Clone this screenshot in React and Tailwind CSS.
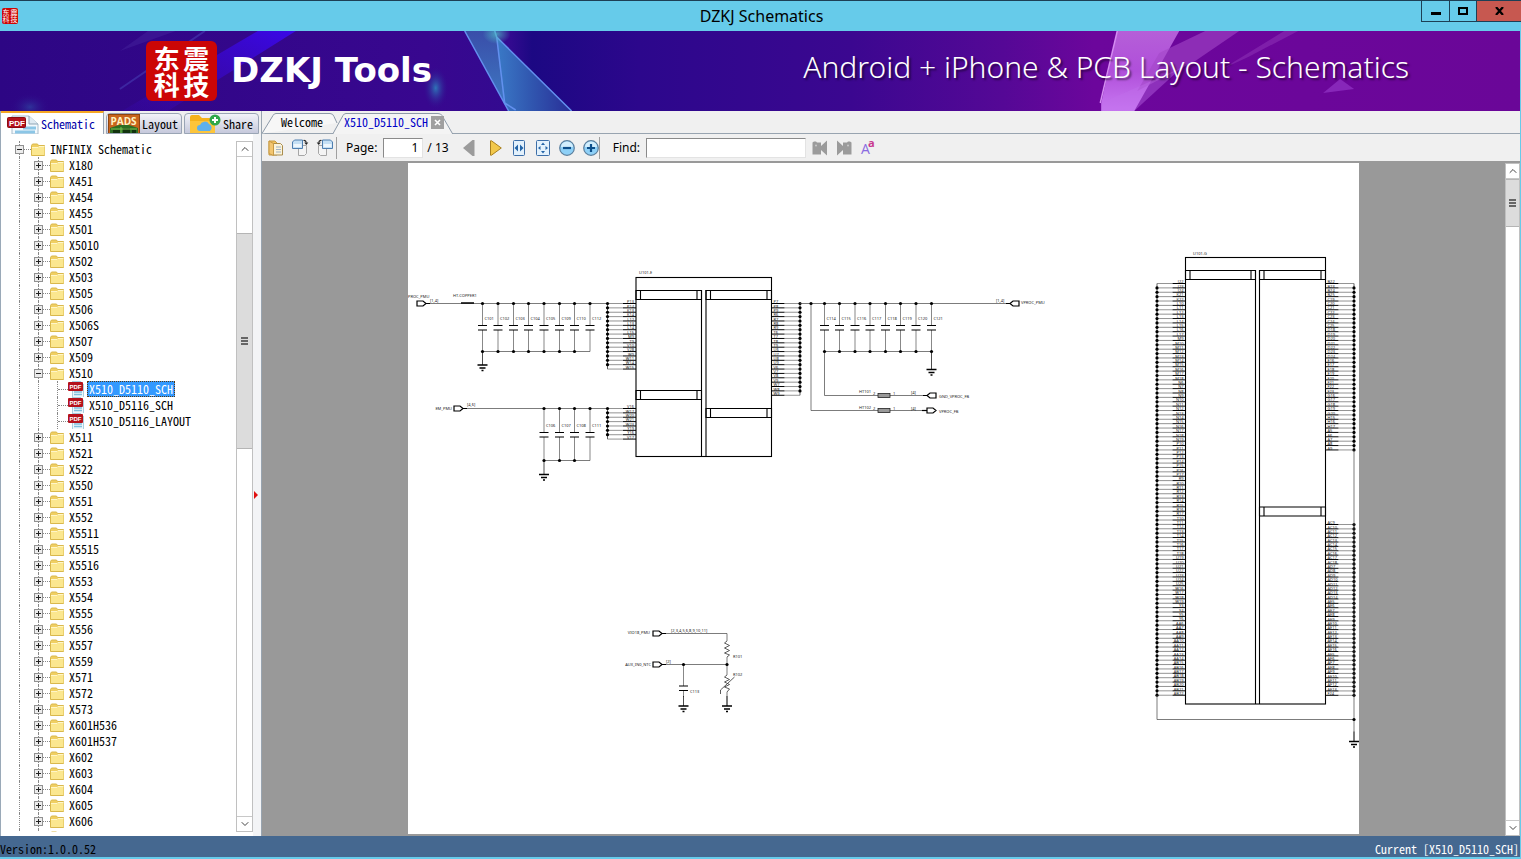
import { useState } from 'react';
import { clsx } from 'clsx';
import { ChevronUp, ChevronDown } from 'lucide-react';

const MONO = "font-['Noto_Sans_Mono_CJK_SC','DejaVu_Sans_Mono',monospace] text-[12px]";
const UI = "font-['Noto_Sans','Open_Sans',sans-serif]";

const before = ['X180', 'X451', 'X454', 'X455', 'X501', 'X5010', 'X502', 'X503', 'X505', 'X506', 'X506S', 'X507', 'X509'];
const files = ['X510_D5110_SCH', 'X510_D5116_SCH', 'X510_D5116_LAYOUT'];
const after = [
  'X511', 'X521', 'X522', 'X550', 'X551', 'X552', 'X5511', 'X5515', 'X5516', 'X553', 'X554', 'X555', 'X556', 'X557',
  'X559', 'X571', 'X572', 'X573', 'X601H536', 'X601H537', 'X602', 'X603', 'X604', 'X605', 'X606',
];

/* ---------- icons ---------- */

function FolderIcon() {
  return (
    <svg width="15" height="13" viewBox="0 0 15 13" className="shrink-0">
      <path d="M.5 2.500 1.500 1h5l1 1.500h6v10H.5z" fill="#f0cf62" stroke="#d9b84c" />
      <path d="M1 4.500h6l1-1h5.500v8.500H1z" fill="#fbe78f" />
      <path d="M1 4.500h6l1-1h5.500" fill="none" stroke="#fff6c8" />
    </svg>
  );
}

function PdfSmall() {
  return (
    <svg width="17" height="16" viewBox="0 0 17 16" className="shrink-0">
      <path d="M4 0h9l3 3v13H4z" fill="#eef7fb" />
      <path d="M4 .5h9M15.500 3v13M4.500 9v7" stroke="#a9cfe0" fill="none" />
      <path d="M6 11h8M6 13.500h8" stroke="#7fc0de" strokeWidth="1.500" />
      <rect x="0" y="1" width="15" height="9" rx="1" fill="#b5121b" />
      <text x="1.500" y="7.800" fontSize="6" fontWeight="700" fill="#fff" fontFamily="Liberation Sans, sans-serif">PDF</text>
    </svg>
  );
}

function PdfLarge() {
  return (
    <svg width="32" height="20" viewBox="0 0 32 20" className="shrink-0">
      <path d="M5 2h17l9 8v10H5z" fill="#f3f9fd" stroke="#a8bccb" />
      <path d="M22 2v8h9" fill="#dfeaf2" stroke="#8fa5b5" />
      <path d="M16 14h13M8 18h20" stroke="#8cc6e6" strokeWidth="3" />
      <rect x="0.500" y="3.500" width="18" height="10" rx="1" fill="#b5121b" stroke="#8b0a12" />
      <text x="2" y="11.500" fontSize="8" fontWeight="700" fill="#fff" fontFamily="Liberation Sans, sans-serif">PDF</text>
    </svg>
  );
}

function PadsIcon() {
  return (
    <svg width="32" height="19" viewBox="0 0 32 19" className="shrink-0">
      <rect x="0.500" y="0.500" width="31" height="20" fill="#c8641c" stroke="#8f4410" />
      <path d="M2 14 11 11h10l9 3v5H2z" fill="#2d6e22" />
      <path d="M5 16h7v3H5zM15 14h7v5h-7zM24 16h4v3h-4z" fill="#12330e" />
      <path d="M3 15h26M13 13v6" stroke="#79c04f" />
      <text x="2.500" y="10.500" fontSize="10" fontWeight="700" fill="#fff3c4" fontFamily="Open Sans, sans-serif">PADS</text>
    </svg>
  );
}

function ShareIcon() {
  return (
    <svg width="32" height="19" viewBox="0 0 32 19" className="shrink-0">
      <path d="M1 3q0-2 2-2h7l3 3h11q2 0 2 2v13H1z" fill="#f6b21b" />
      <path d="M1 7h25v12H1z" fill="#fdc53a" />
      <path d="M11 17a3 3 0 0 1 0-6 5 5 0 0 1 9-1 4 4 0 0 1 1 7z" fill="#5eb0ec" />
      <circle cx="26" cy="6" r="5.500" fill="#2fa84a" />
      <path d="M26 3v6M23 6h6" stroke="#fff" strokeWidth="2" />
    </svg>
  );
}

function OpenIcon() {
  return (
    <svg width="16" height="18" viewBox="0 0 16 18">
      <path d="M1 2h6l2 2v12H1z" fill="#f3c35a" stroke="#c79a45" />
      <path d="M5.500 4.500h7l2 2v9.500h-9z" fill="#fbf3da" stroke="#a98c4c" />
      <path d="M1 2l4.500 2.500v12L1 14.500z" fill="#f3c670" stroke="#c79a45" />
      <path d="M8 8h5M8 10.500h5M8 13h5" stroke="#9fb2c4" />
    </svg>
  );
}

function RotateIcon({ flip }) {
  return (
    <svg width="17" height="17" viewBox="0 0 17 17" className={clsx(flip && '-scale-x-100')}>
      <path d="M6.500 6.500h8v8l-2 2h-6z" fill="#f4f4f4" stroke="#a6a6a6" />
      <path d="M.5 3 2.500 1h8v8.500H.5z" fill="#c5e0f5" stroke="#4f7fb0" />
      <path d="M1.500 6.500h8" stroke="#eef7fd" strokeWidth="3" />
      <path d="M11.500 1.500q2.500-.3 2.800 2" fill="none" stroke="#222" strokeWidth="1.200" />
      <path d="M12.300 3.500h4l-2 2.500z" fill="#222" />
    </svg>
  );
}

function FitWidthIcon() {
  return (
    <svg width="12" height="16" viewBox="0 0 12 16">
      <rect x="0.500" y="0.500" width="11" height="15" rx="1" fill="#e3f1fc" stroke="#3c6ea8" />
      <path d="M5 4.500v7L1.500 8zM7 4.500v7L10.500 8z" fill="#2465a8" />
    </svg>
  );
}

function FitPageIcon() {
  return (
    <svg width="14" height="16" viewBox="0 0 14 16">
      <rect x="0.500" y="0.500" width="13" height="15" rx="1" fill="#e3f1fc" stroke="#3c6ea8" />
      <path d="M7 2.500 9 5H5zM7 13.500l2-2.500H5zM2 8l2.500-2v4zM12 8 9.500 6v4z" fill="#2465a8" />
    </svg>
  );
}

function ZoomIcon({ plus }) {
  return (
    <svg width="16" height="16" viewBox="0 0 16 16">
      <circle cx="8" cy="8" r="7.300" fill="#8ed0f7" stroke="#5c7f9d" strokeWidth="1.200" />
      <path d="M2 7a6 5.500 0 0 1 12 0z" fill="#d2eefd" />
      <path d={plus ? 'M4 8h8M8 4v8' : 'M4 8h8'} stroke="#0d4f8b" strokeWidth="2.200" />
    </svg>
  );
}

function FindIcon({ next }) {
  return (
    <svg width="16" height="16" viewBox="0 0 16 16" className={clsx(next && '-scale-x-100')}>
      <path d="M.5 2.500 2 1.500h2l1 1h4V6L15 .5v15L9 10v4.500H.5z" fill="#9b9b9b" />
      <circle cx="4" cy="5.500" r="1" fill="#c9c9c9" />
    </svg>
  );
}

/* ---------- tree ---------- */

function Toggle({ open }) {
  return (
    <button type="button" aria-label={open ? 'Collapse' : 'Expand'} className="relative -ml-[5px] flex size-[9px] shrink-0 items-center justify-center border border-[#919191] bg-[#ececec]">
      <span className="absolute h-px w-[5px] bg-[#222]" />
      {!open && <span className="absolute h-[5px] w-px bg-[#222]" />}
    </button>
  );
}

const Guide = () => <span className="h-full w-[19px] shrink-0 border-r border-dotted border-[#888]" />;
const Dash = () => <span className="h-px w-[7px] shrink-0 border-t border-dotted border-[#888]" />;

function FolderRow({ name, open }) {
  return (
    <li className="flex h-4 items-center">
      <Guide />
      <Guide />
      <Toggle open={open} />
      <Dash />
      <FolderIcon />
      {name && <span className="ml-[4px] whitespace-nowrap">{name}</span>}
    </li>
  );
}

function FileRow({ name, active, onSelect }) {
  return (
    <li className="flex h-4 items-center">
      <Guide />
      <Guide />
      <Guide />
      <span className="h-px w-[10px] shrink-0 border-t border-dotted border-[#888]" />
      <PdfSmall />
      <button
        type="button"
        onClick={onSelect}
        className={clsx(
          'ml-[2px] h-4 border px-px leading-[14px] whitespace-nowrap',
          active ? 'border-dotted border-[#5a3a10] bg-[#3399ff] text-white' : 'border-transparent'
        )}
      >
        {name}
      </button>
    </li>
  );
}

function ScrollBar({ thumb }) {
  return (
    <div className="flex h-full w-full flex-col border border-[#c0c0c0] bg-white">
      <button type="button" aria-label="Scroll up" className="flex h-[15px] shrink-0 items-center justify-center border-b border-[#c8c8c8]">
        <ChevronUp size={12} color="#444" />
      </button>
      <div className="flex min-h-0 flex-1 flex-col">{thumb}</div>
      <button type="button" aria-label="Scroll down" className="flex h-[15px] shrink-0 items-center justify-center border-t border-[#c8c8c8]">
        <ChevronDown size={12} color="#444" />
      </button>
    </div>
  );
}

function Grip() {
  return (
    <span className="flex flex-col gap-px">
      <span className="h-[2px] w-[7px] bg-[#666]" />
      <span className="h-[2px] w-[7px] bg-[#666]" />
      <span className="h-[2px] w-[7px] bg-[#666]" />
    </span>
  );
}

function Sidebar({ selected, onSelect }) {
  const tab = 'flex items-center rounded-t-sm border border-[#9aa5b5] bg-linear-to-b from-[#f2f3f8] to-[#c6c9dc]';
  return (
    <aside className="flex w-[253px] shrink-0 flex-col border-l border-[#9aa9b8] bg-white">
      <div className={clsx('-mr-[8px] flex h-[23px] shrink-0 items-end gap-[2px] bg-[#f0f0f0]', MONO)}>
        <button type="button" className="flex h-[23px] w-[103px] items-center border-t-2 border-r border-t-[#f5a623] border-r-[#9aa5b5] bg-white pl-[6px] text-[#0000a8]">
          <PdfLarge />
          <span className="ml-[2px]">Schematic</span>
        </button>
        <button type="button" className={clsx(tab, 'h-[21px] w-[76px] pl-[1px]')}>
          <PadsIcon />
          <span className="ml-[2px]">Layout</span>
        </button>
        <button type="button" className={clsx(tab, 'h-[21px] w-[75px] pl-[4px]')}>
          <ShareIcon />
          <span className="ml-[2px]">Share</span>
        </button>
      </div>
      <div className="flex min-h-0 flex-1 pt-[7px] pb-[4px]">
        <ul className={clsx('min-w-0 flex-1 overflow-hidden leading-4', MONO)}>
          <li className="flex h-4 items-center">
            <Guide />
            <Toggle open />
            <Dash />
            <FolderIcon />
            <span className="ml-[4px] whitespace-nowrap">INFINIX Schematic</span>
          </li>
          {before.map((n) => <FolderRow key={n} name={n} />)}
          <FolderRow name="X510" open />
          {files.map((n) => <FileRow key={n} name={n} active={n === selected} onSelect={() => onSelect(n)} />)}
          {after.map((n) => <FolderRow key={n} name={n} />)}
          <FolderRow />
        </ul>
        <div className="w-[17px] shrink-0">
          <ScrollBar
            thumb={
              <>
                <div className="grow-[76] basis-0" />
                <div className="flex grow-[215] basis-0 items-center justify-center border-y border-[#b5b5b5] bg-[#dcdcdc]">
                  <Grip />
                </div>
                <div className="grow-[368] basis-0" />
              </>
            }
          />
        </div>
      </div>
    </aside>
  );
}

/* ---------- banner ---------- */

function Banner() {
  return (
    <header className="relative flex h-20 shrink-0 items-center overflow-hidden bg-[#30078a]">
      <svg className="absolute inset-0 h-full w-full" viewBox="0 0 1521 80" preserveAspectRatio="none">
        <defs>
          <linearGradient id="base">
            <stop offset="0" stopColor="#2d0684" />
            <stop offset="0.280" stopColor="#38078f" />
            <stop offset="0.335" stopColor="#330a90" />
            <stop offset="0.350" stopColor="#1c0883" />
            <stop offset="0.420" stopColor="#2c078c" />
            <stop offset="0.560" stopColor="#3b0790" />
            <stop offset="0.660" stopColor="#550896" />
            <stop offset="0.720" stopColor="#6c069c" />
            <stop offset="1" stopColor="#6a0698" />
          </linearGradient>
          <linearGradient id="beam" x1="0" y1="1" x2="1" y2="0">
            <stop offset="0" stopColor="#3a08b8" stopOpacity="0.200" />
            <stop offset="1" stopColor="#3a08e8" />
          </linearGradient>
          <linearGradient id="shard" x1="0" y1="0" x2="0" y2="1">
            <stop offset="0" stopColor="#3a55ac" />
            <stop offset="1" stopColor="#3f86c8" />
          </linearGradient>
          <linearGradient id="shard2">
            <stop offset="0" stopColor="#3a86cc" />
            <stop offset="1" stopColor="#2a3299" />
          </linearGradient>
          <linearGradient id="pink" x1="0" y1="0" x2="0" y2="1">
            <stop offset="0" stopColor="#b55fd8" />
            <stop offset="0.500" stopColor="#b04fda" />
            <stop offset="1" stopColor="#c878f2" />
          </linearGradient>
          <radialGradient id="glow">
            <stop offset="0" stopColor="#2f74b8" />
            <stop offset="1" stopColor="#30078a" stopOpacity="0" />
          </radialGradient>
          <radialGradient id="spark">
            <stop offset="0" stopColor="#4fc0c8" stopOpacity="0.900" />
            <stop offset="1" stopColor="#4fc0c8" stopOpacity="0" />
          </radialGradient>
        </defs>
        <rect width="1521" height="80" fill="url(#base)" />
        <path d="M258 0h38L168 80h-46z" fill="url(#beam)" />
        <path d="M205 0 120 58" stroke="#4a46bb" strokeWidth="2" opacity="0.500" />
        <path d="M176 0h-28l-28 20z" fill="#43229c" opacity="0.500" />
        <ellipse cx="436" cy="57" rx="13" ry="22" fill="url(#glow)" />
        <ellipse cx="30" cy="76" rx="20" ry="14" fill="url(#glow)" opacity="0.400" />
        <path d="M465 0h31l10 74z" fill="url(#shard)" opacity="0.900" />
        <path d="M497 6 572 80h-63l-5-8z" fill="url(#shard2)" opacity="0.900" />
        <path d="M465 0 509 80M495 0l2 6 8 66 11 7M497 6l75 74" fill="none" stroke="#6390ee" strokeWidth="1.500" />
        <ellipse cx="497" cy="3" rx="14" ry="10" fill="url(#spark)" opacity="0.800" />
        <path d="M1118 0h62l-45 80h-33v-8z" fill="url(#pink)" />
        <path d="M1118 0 1101 72" stroke="#d58cf2" strokeWidth="1.500" />
        <path d="M1206 0h34l-44 30-58 30 22-38z" fill="#a348c8" opacity="0.600" />
        <path d="M1285 0h14l-50 26-26 12z" fill="#8b2eb4" opacity="0.600" />
        <path d="M1102 72l80-35-47 43h-33z" fill="#c070ec" opacity="0.400" />
        <path d="M1341 48l14 10-31 4z" fill="#8f2fc0" opacity="0.800" />
      </svg>
      <div className="relative ml-[146px] grid h-[60px] w-[71px] shrink-0 grid-cols-2 content-center justify-items-center rounded-md bg-[#cc0606] px-[6px] font-['Noto_Sans_CJK_SC',sans-serif] text-[26px] leading-[26px] font-bold text-white">
        <span>东</span>
        <span>震</span>
        <span>科</span>
        <span>技</span>
      </div>
      <h1 className="relative mb-[2px] ml-[14px] font-['DejaVu_Sans',sans-serif] text-[34px] leading-none font-bold whitespace-nowrap text-white">DZKJ Tools</h1>
      <p className="relative mr-[111px] mb-[8px] ml-auto font-['Noto_Sans',sans-serif] text-[30px] leading-none font-light whitespace-nowrap text-white [text-shadow:2px_2px_2px_rgba(0,0,0,0.5)]">
        Android + iPhone &amp; PCB Layout - Schematics
      </p>
    </header>
  );
}

/* ---------- schematic ---------- */

const range = (n) => Array.from({ length: n }, (_, i) => i);

const T = ({ x, y, children, end, size = 4 }) => (
  <text x={x} y={y} fontSize={size} textAnchor={end ? 'end' : 'start'} fill="#222" stroke="none" fontFamily="Noto Sans, sans-serif">
    {children}
  </text>
);

const Dot = ({ x, y }) => <circle cx={x} cy={y} r="1.600" fill="#000" stroke="none" />;

function Ground({ x, y, h = 10 }) {
  return (
    <g stroke="#000">
      <path d={`M${x} ${y - h}V${y}`} strokeWidth="0.700" />
      <path d={`M${x - 5} ${y}h10M${x - 3} ${y + 3}h6M${x - 1} ${y + 5.500}h2`} strokeWidth="1.300" />
    </g>
  );
}

function Cap({ x, top, mid, bottom, label, tail = true }) {
  return (
    <g>
      <path d={`M${x} ${top}V${mid - 2}M${x} ${mid + 2.500}V${bottom}`} stroke="#555" strokeWidth="0.700" />
      <path d={`M${x - 4.500} ${mid - 2}h9M${x - 4.500} ${mid + 2.500}h9`} stroke="#000" strokeWidth="1.200" />
      <Dot x={x} y={top} />
      {tail && <Dot x={x} y={bottom} />}
      {label && <T x={x + 2} y={mid - 8}>{label}</T>}
    </g>
  );
}

// chip: edge of the body, bus: x of the vertical wire the pins run to
function Pins({ chip, bus, y, step, labels, skipFirst, skipLast }) {
  const dir = bus < chip ? -1 : 1;
  const last = y + step * (labels.length - 1);
  return (
    <g>
      <path d={`M${bus} ${y}V${last}`} stroke="#333" strokeWidth="0.800" />
      {labels.map((label, i) => {
        const py = y + i * step;
        const hidden = (skipFirst && i === 0) || (skipLast && i === labels.length - 1);
        return (
          <g key={i}>
            <path d={`M${chip + dir * 13} ${py}H${bus}`} stroke="#666" strokeWidth="0.700" />
            <path d={`M${chip} ${py}h${dir * 13}`} stroke="#000" strokeWidth="1" />
            {!hidden && <Dot x={bus} y={py} />}
            <T x={chip + dir * 2} y={py - 0.300} end={dir < 0}>{label}</T>
          </g>
        );
      })}
    </g>
  );
}

function Header({ x, y, w, h = 9 }) {
  return <path d={`M${x} ${y}h${w}v${h}h${-w}zM${x + 4.500} ${y}v${h}M${x + w - 4.500} ${y}v${h}`} />;
}

function Port({ x, y, flip }) {
  const d = flip
    ? `M${x + 9} ${y - 2.500}h-6l-3 2.500 3 2.500h6zM${x} ${y}h-4`
    : `M${x} ${y - 2.500}h6l3 2.500-3 2.500h-6zM${x + 9} ${y}h4`;
  return <path d={d} fill="#fff" stroke="#000" strokeWidth="1.200" />;
}

const series = (rows) => rows.flatMap(([p, from, n]) => range(n).map((i) => `${p}${from + i}`));

const coreLeft = ['P13', 'P14', 'K13', 'K14', 'L12', 'L13', 'L14', 'L15', 'M9', 'T9', 'V10', 'V28', 'W9', 'W11', 'W14', 'W15'];
const sramLeft = ['V16', 'W17', 'W20', 'W21', 'W23', 'Y19', 'Y16', 'V17'];
const coreRight = ['P7', 'P8', 'P9', 'R6', 'R7', 'R8', 'R9', 'T6', 'T7', 'T8', 'T9', 'U6', 'U7', 'U8', 'U9', 'V6', 'V7', 'V8', 'V9', 'W7', 'W8', 'W9'];
const gndLeft = series([
  ['J', 22, 3], ['K', 21, 2], ['L', 10, 8], ['M', 9, 10], ['N', 6, 14], ['P', 10, 8], ['R', 9, 9], ['T', 10, 9],
  ['U', 19, 7], ['W', 16, 4], ['Y', 3, 4], ['AA', 6, 9], ['AB', 15, 8],
]);
const gndRight = series([['B', 22, 4], ['C', 19, 7], ['D', 18, 7], ['E', 16, 4], ['F', 20, 4], ['G', 16, 5], ['H', 15, 3], ['A', 5, 5]]);
const gndRight2 = series([['AC', 9, 10], ['AD', 7, 8], ['AE', 5, 12], ['AF', 5, 9], ['F', 24, 1]]);

function Schematic() {
  const capsA = [482.5, 498, 513.5, 528.5, 544, 559.5, 574.5, 590];
  const namesA = ['C101', 'C102', 'C103', 'C104', 'C105', 'C109', 'C110', 'C112'];
  const capsB = [544, 559.5, 574.5, 590];
  const namesB = ['C106', 'C107', 'C108', 'C111'];
  const capsC = [824.5, 839.5, 855, 870, 885.5, 900.5, 916, 931.5];
  const namesC = ['C114', 'C115', 'C116', 'C117', 'C118', 'C119', 'C120', 'C121'];
  return (
    <svg viewBox="408 163 951 671" className="h-full w-[951px] shrink-0 bg-white" preserveAspectRatio="xMidYMin slice" fill="none">
      {/* VPROC supply */}
      <T x="408" y="298">PROC_PMU</T>
      <T x="430" y="302">[1,4]</T>
      <T x="453" y="297">HT-COPPER1</T>
      <path d="M426 303.500H607.500M482.500 351.500H590" stroke="#444" strokeWidth="0.700" />
      <path d="M461 303h13" stroke="#000" strokeWidth="1.500" />
      <Port x={417} y={303.500} />
      {capsA.map((x, i) => <Cap key={x} x={x} top={303.500} mid={327.500} bottom={351.500} label={namesA[i]} tail={i < 7} />)}
      <Ground x={482.500} y={365} h={13} />

      {/* SRAM supply */}
      <T x="452" y="410" end>EM_PMU</T>
      <T x="467" y="406">[4,6]</T>
      <path d="M463 408.500H607.500M544 460.500H590" stroke="#444" strokeWidth="0.700" />
      <Port x={454} y={408.500} />
      {capsB.map((x, i) => <Cap key={x} x={x} top={408.500} mid={434.500} bottom={460.500} label={namesB[i]} tail={i < 3} />)}
      <Ground x={544} y={474.500} h={14} />

      {/* U101-E */}
      <T x="639" y="274">U101-E</T>
      <g stroke="#000" strokeWidth="1.100">
        <rect x="636" y="277.500" width="135.500" height="179" />
        <path d="M701.500 290V456.500M706 290V456.500" />
        <Header x={636} y={290.500} w={65.500} />
        <Header x={706} y={290.500} w={65.500} />
        <Header x={636} y={390.500} w={65.500} />
        <Header x={706} y={408.500} w={65.500} />
      </g>
      <Pins chip={636} bus={607.500} y={303.500} step={4.370} labels={coreLeft} skipLast />
      <Pins chip={636} bus={607.500} y={408.500} step={4.370} labels={sramLeft} skipLast />
      <Pins chip={771.500} bus={800} y={303.500} step={4.370} labels={coreRight} skipLast />

      {/* VPROC output */}
      <path d="M800 303.500H1011M824.500 351.500H931.500M824.500 351.500V395.500H928M811 303.500V410.500H928" stroke="#444" strokeWidth="0.700" />
      <Dot x={811} y={303.500} />
      {capsC.map((x, i) => <Cap key={x} x={x} top={303.500} mid={327.500} bottom={351.500} label={namesC[i]} />)}
      <Ground x={931.500} y={369.500} h={18} />
      <T x="996" y="302">[1,4]</T>
      <Port x={1010} y={303.500} flip />
      <T x="1021" y="303.500">VPROC_PMU</T>
      <T x="859" y="393">HT101</T>
      <T x="873" y="394.500">2</T>
      <T x="893" y="394.500">1</T>
      <T x="911" y="394">[4]</T>
      <T x="859" y="408.500">HT102</T>
      <T x="873" y="409.500">2</T>
      <T x="893" y="409.500">1</T>
      <T x="911" y="409.500">[4]</T>
      <rect x="878" y="393.500" width="12" height="4" fill="#999" stroke="#222" strokeWidth="0.800" />
      <rect x="878" y="408.500" width="12" height="4" fill="#999" stroke="#222" strokeWidth="0.800" />
      <Port x={927} y={395.500} flip />
      <path d="M922 410.500h5" stroke="#000" strokeWidth="1.200" />
      <path d="M927 408h6l3 2.500-3 2.500h-6z" fill="#fff" stroke="#000" strokeWidth="1.200" />
      <T x="939" y="397.500">GND_VPROC_FB</T>
      <T x="939" y="412.500">VPROC_FB</T>

      {/* NTC divider */}
      <T x="650" y="634" end>VIO18_PMU</T>
      <T x="651" y="665.500" end>AUX_IN0_NTC</T>
      <T x="671" y="632">[2,3,4,5,6,8,9,10,11]</T>
      <T x="666" y="663">[2]</T>
      <path d="M662 633.500H727V641M727 657V675M727 692V706M662 664.500H727" stroke="#444" strokeWidth="0.700" />
      <path d="M727 641l-2.500 2 5 2.500-5 2.500 5 2.500-5 2.500 5 2-2.500 2M727 675l-2.500 2 5 2.500-5 2.500 5 2.500-5 2.500 5 2-2.500 3M720.500 694v-4l14-13" stroke="#333" strokeWidth="0.800" />
      <Port x={653} y={633.500} />
      <Port x={653} y={664.500} />
      <Dot x={727} y={664.500} />
      <T x="733" y="658">R101</T>
      <T x="733" y="675.500">R102</T>
      <Cap x={683.500} top={664.500} mid={688} bottom={697} tail={false} />
      <T x="690" y="693">C113</T>
      <Ground x={683.500} y={706} />
      <Ground x={727} y={706} />

      {/* U101-G */}
      <T x="1193" y="255">U101-G</T>
      <g stroke="#000" strokeWidth="1.100">
        <rect x="1185.500" y="257.500" width="140" height="446.500" />
        <path d="M1255.500 270V704M1259.500 270V704" />
        <Header x={1185.500} y={270.500} w={70} />
        <Header x={1259.500} y={270.500} w={66} />
        <Header x={1259.500} y={507} w={66} />
      </g>
      <Pins chip={1185.500} bus={1157} y={283.500} step={4.380} labels={gndLeft} skipFirst />
      <Pins chip={1325.500} bus={1354} y={283.500} step={4.380} labels={gndRight} skipFirst />
      <Pins chip={1325.500} bus={1354} y={524.500} step={4.380} labels={gndRight2} />
      <path d="M1157 695V719.500H1354M1354 450V741" stroke="#444" strokeWidth="0.700" />
      <Dot x={1354} y={719.500} />
      <Ground x={1354} y={741.500} />
    </svg>
  );
}

/* ---------- document area ---------- */

function DocTabs() {
  return (
    <nav className={clsx('relative flex h-[23px] shrink-0 items-center border-b border-[#98a4b0] bg-[#f0f0f0]', MONO)}>
      <svg className="absolute top-0 left-0" width="194" height="23" viewBox="0 0 194 23">
        <path d="M0 22.500 11 4.500Q12 2.500 14 2.500H68q3 0 4 3L75 12" fill="#f7f7f7" stroke="#8d9aa8" />
        <path d="M70.500 23.500 81 4.500Q82 2.500 84 2.500H176q3 0 4 2L191 23.500" fill="#f4f4f4" stroke="#8d9aa8" />
      </svg>
      <button type="button" className="relative ml-[19px]">Welcome</button>
      <button type="button" className="relative ml-[21px] text-[#0000c8]">X510_D5110_SCH</button>
      <button type="button" aria-label="Close tab" className="relative ml-[3px] flex size-[13px] items-center justify-center bg-[#a0a0a0]">
        <svg width="7" height="7" viewBox="0 0 7 7">
          <path d="M1 1l5 5M6 1 1 6" stroke="#fff" strokeWidth="1.600" />
        </svg>
      </button>
    </nav>
  );
}

function Toolbar() {
  const [page, setPage] = useState('1');
  const [find, setFind] = useState('');
  const field = 'border border-[#e3e3e3] border-t-[#8a8a8a] border-l-[#8a8a8a] bg-white h-5 outline-none';
  return (
    <div className={clsx('flex h-[29px] shrink-0 items-center border-b-2 border-[#999] bg-[#f0f0f0] pl-[6px] text-[12px] text-black', UI)}>
      <button type="button" aria-label="Open"><OpenIcon /></button>
      <button type="button" aria-label="Rotate right" className="ml-[8px]"><RotateIcon /></button>
      <button type="button" aria-label="Rotate left" className="ml-[7px]"><RotateIcon flip /></button>
      <span className="ml-[3px] h-[22px] w-px bg-[#a0a0a0]" />
      <label htmlFor="page" className="ml-[9px]">Page:</label>
      <input id="page" value={page} onChange={(e) => setPage(e.target.value)} className={clsx(field, 'ml-[6px] w-[40px] pr-[4px] text-right')} />
      <span className="ml-[4px]">/ 13</span>
      <button type="button" aria-label="Previous page" className="ml-[14px]">
        <svg width="12" height="16" viewBox="0 0 12 16"><path d="M11.500 0v16h-2L0 8l9.500-8z" fill="#9b9b9b" /></svg>
      </button>
      <button type="button" aria-label="Next page" className="ml-[15px]">
        <svg width="12" height="16" viewBox="0 0 12 16"><path d="M.5.800h1L11.300 8l-9.800 7.200h-1z" fill="#f2c84b" stroke="#a98020" /></svg>
      </button>
      <button type="button" aria-label="Fit width" className="ml-[11px]"><FitWidthIcon /></button>
      <button type="button" aria-label="Fit page" className="ml-[11px]"><FitPageIcon /></button>
      <button type="button" aria-label="Zoom out" className="ml-[9px]"><ZoomIcon /></button>
      <button type="button" aria-label="Zoom in" className="ml-[8px]"><ZoomIcon plus /></button>
      <span className="h-[22px] w-px bg-[#a0a0a0]" />
      <label htmlFor="find" className="ml-[13px]">Find:</label>
      <input id="find" value={find} onChange={(e) => setFind(e.target.value)} className={clsx(field, 'ml-[6px] w-[160px] px-1')} />
      <button type="button" aria-label="Find previous" className="ml-[6px]"><FindIcon /></button>
      <button type="button" aria-label="Find next" className="ml-[8px]"><FindIcon next /></button>
      <button type="button" aria-label="Match case" className="ml-[9px]">
        <svg width="16" height="18" viewBox="0 0 16 18" className="overflow-visible">
          <text x="0" y="15" fontSize="14" fill="#8a6be0" fontFamily="Open Sans, sans-serif">A</text>
          <text x="7" y="8" fontSize="11" fontWeight="700" fill="#c9388f" fontFamily="Open Sans, sans-serif">a</text>
        </svg>
      </button>
    </div>
  );
}

export default function App() {
  const [selected, setSelected] = useState('X510_D5110_SCH');

  return (
    <div className="flex h-screen flex-col overflow-hidden border-t border-[#1d3f55] bg-[#66cbea] text-black">
      <div className="flex h-[30px] shrink-0 items-start">
        <div className="flex flex-1 items-center self-stretch pl-[2px]">
          <div className="grid size-4 grid-cols-2 content-center justify-items-center rounded-xs bg-[#cc0606] font-['Noto_Sans_CJK_SC',sans-serif] text-[7px] leading-[7px] text-white">
            <span>东</span>
            <span>震</span>
            <span>科</span>
            <span>技</span>
          </div>
        </div>
        <span className={clsx('self-center text-[16px] leading-none', UI)}>DZKJ Schematics</span>
        <div className="flex flex-1 justify-end">
          <button type="button" aria-label="Minimize" className="flex h-[21px] w-[29px] items-center justify-center border border-t-0 border-[#1d3f55]">
            <span className="mt-[5px] h-[3px] w-[10px] bg-black" />
          </button>
          <button type="button" aria-label="Maximize" className="flex h-[21px] w-[26px] items-center justify-center border-b border-[#1d3f55]">
            <span className="h-[8px] w-[10px] border-2 border-black" />
          </button>
          <button type="button" aria-label="Close" className="flex h-[21px] w-[45px] items-center justify-center border-b border-l border-[#1d3f55] bg-[#c75850]">
            <svg width="9" height="8" viewBox="0 0 9 8"><path d="M1 0l7 8M8 0 1 8" stroke="#000" strokeWidth="2.200" /></svg>
          </button>
        </div>
      </div>

      <div className="mr-px flex min-h-0 flex-1 flex-col">
        <Banner />
        <div className="flex min-h-0 flex-1 bg-[#f0f0f0]">
          <Sidebar selected={selected} onSelect={setSelected} />
          <div className="mt-[23px] flex w-[8px] shrink-0 items-center bg-[#f3f4f6]">
            <svg width="6" height="8" viewBox="0 0 6 8" className="mt-[20px]"><path d="M1 0v8l4-4z" fill="#e01010" /></svg>
          </div>
          <main className="flex min-w-0 flex-1 flex-col border-l border-[#98a4b0]">
            <DocTabs />
            <Toolbar />
            <div className="flex min-h-0 flex-1 bg-[#999]">
              <div className="flex min-w-0 flex-1 justify-center overflow-hidden pb-[2px]">
                <Schematic />
              </div>
              <div className="w-[15px] shrink-0">
                <ScrollBar
                  thumb={
                    <div className="flex h-[48px] items-center justify-center border-y border-[#b5b5b5] bg-[#dcdcdc]">
                      <Grip />
                    </div>
                  }
                />
              </div>
            </div>
          </main>
        </div>
        <footer className={clsx('flex h-[21px] shrink-0 items-end justify-between bg-[#456890] pb-px leading-[14px]', MONO)}>
          <span>Version:1.0.0.52</span>
          <span className="pr-px text-white">Current [X510_D5110_SCH]</span>
        </footer>
        <div className="h-[2px] shrink-0" />
      </div>
    </div>
  );
}
